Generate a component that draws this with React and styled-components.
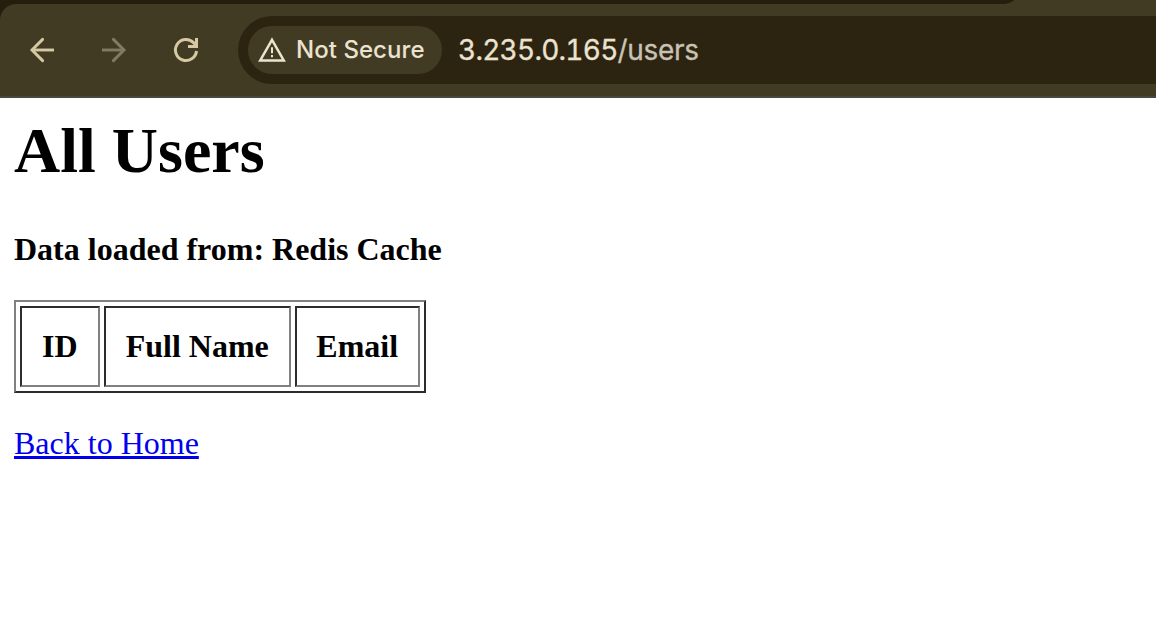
import React from "react";
import styled, { createGlobalStyle } from "styled-components";

const GlobalStyle = createGlobalStyle`
  html, body { margin: 0; background: #fff; }
  body { width: 1156px; height: 638px; overflow: hidden; }
  * { box-sizing: border-box; }
`;

const Chrome = styled.header`
  height: 98px;
  background: #261d0d;
  overflow: hidden;
`;

const TabStrip = styled.div`
  height: 4px;
  background: #423b24;
  display: flex;
  align-items: flex-end;
  overflow: hidden;
`;

const InactiveTabs = styled.div`
  flex: none;
  width: 1021px;
  height: 24px;
  background: #261d0d;
  border-bottom-right-radius: 18px;
`;

const Toolbar = styled.div`
  display: flex;
  align-items: center;
  height: 94px;
  padding-left: 24px;
  background: #423b24;
  border-bottom: 2px solid #4a473d;
  border-top-left-radius: 16px;
`;

const NavButton = styled.button`
  flex: none;
  display: flex;
  width: 36px;
  height: 36px;
  margin-right: 36px;
  padding: 0;
  border: 0;
  background: none;
  color: ${(p) => (p.$dim ? "#837a62" : "#d5c8a3")};
  svg { display: block; }
`;

const AddressBar = styled.div`
  flex: 1;
  display: flex;
  align-items: center;
  height: 68px;
  margin-left: -2px;
  padding-left: 10px;
  background: #2c2410;
  border-radius: 34px 0 0 34px;
`;

const SecurityChip = styled.div`
  flex: none;
  display: flex;
  align-items: center;
  width: 194px;
  height: 48px;
  padding-left: 10px;
  border-radius: 24px;
  background: #423b24;
  color: #ebe2d0;
  font: 500 24px/48px Inter, sans-serif;
  white-space: nowrap;
  svg { flex: none; margin-right: 10px; }
`;

const ChipLabel = styled.span`
  letter-spacing: 0.05px;
`;

const Url = styled.div`
  margin-left: 16px;
  color: #ebe2d0;
  font: 400 28px/48px Inter, sans-serif;
  font-variant-numeric: tabular-nums;
  font-kerning: none;
  letter-spacing: -0.75px;
  -webkit-text-stroke: 0.3px currentColor;
  white-space: nowrap;
`;

const UrlPath = styled.span`
  color: #c9c3b5;
  letter-spacing: -0.3px;
`;

const Page = styled.main`
  padding: 16px 14px;
  color: #000;
  font: 32px/36px "Liberation Serif", serif;
`;

const Title = styled.h1`
  margin: 0;
  font-size: 64px;
  line-height: 74px;
  white-space: nowrap;
`;

const Source = styled.p`
  margin: 43px 0 0;
  font-weight: 700;
`;

const UserTable = styled.table`
  margin: 33px 0 32px;
  width: 412px;
  height: 93px;
  table-layout: fixed;
  border-collapse: separate;
  border-spacing: 4px;
  border: 2px solid;
  border-color: #808080 #2c2c2c #2c2c2c #808080;
`;

const HeadCell = styled.th`
  width: ${(p) => p.$width}px;
  padding: 0 0.5px 2px 0;
  border: 2px solid;
  border-color: #2c2c2c #808080 #808080 #2c2c2c;
  text-align: center;
  vertical-align: middle;
  white-space: nowrap;
`;

const HomeLink = styled.a`
  color: #0000ee;
  text-decoration: underline;
  text-decoration-thickness: 3px;
  text-underline-offset: 2px;
  text-decoration-skip-ink: none;
`;

const columns = [
  { label: "ID", width: 80 },
  { label: "Full Name", width: 187 },
  { label: "Email", width: 125 },
];

const Arrow = ({ flip }) => (
  <svg width="36" height="36" viewBox="0 0 36 36" fill="none" stroke="currentColor" strokeWidth="2.9">
    <g transform={flip ? "translate(36 0) scale(-1 1)" : undefined}>
      <path d="M30 18H8" />
      <path d="M18.6 7.4 8 18l10.6 10.6" strokeLinecap="round" />
    </g>
  </svg>
);

const Reload = () => (
  <svg width="36" height="36" viewBox="0 0 36 36" fill="none" stroke="currentColor" strokeWidth="3">
    <path d="M28.5 19a10.55 10.55 0 1 1-3-8.4l2.9 3" />
    <path d="M28.5 6v8.5H20" />
  </svg>
);

const Warning = () => (
  <svg width="28" height="26" viewBox="0 0 28 26" fill="none" stroke="currentColor">
    <path d="M14 2.8 25.8 23.4H2.2Z" strokeWidth="2.5" />
    <path d="M14 10.2v6M14 18v2.3" strokeWidth="2" />
  </svg>
);

export default function App() {
  return (
    <>
      <GlobalStyle />
      <Chrome>
        <TabStrip>
          <InactiveTabs />
        </TabStrip>
        <Toolbar>
          <NavButton aria-label="Back"><Arrow /></NavButton>
          <NavButton aria-label="Forward" $dim><Arrow flip /></NavButton>
          <NavButton aria-label="Reload"><Reload /></NavButton>
          <AddressBar>
            <SecurityChip>
              <Warning />
              <ChipLabel>Not Secure</ChipLabel>
            </SecurityChip>
            <Url>3.235.0.165<UrlPath>/users</UrlPath></Url>
          </AddressBar>
        </Toolbar>
      </Chrome>
      <Page>
        <Title>All Users</Title>
        <Source>Data loaded from: Redis Cache</Source>
        <UserTable>
          <thead>
            <tr>
              {columns.map((c) => (
                <HeadCell key={c.label} $width={c.width}>{c.label}</HeadCell>
              ))}
            </tr>
          </thead>
        </UserTable>
        <HomeLink href="#">Back to Home</HomeLink>
      </Page>
    </>
  );
}
